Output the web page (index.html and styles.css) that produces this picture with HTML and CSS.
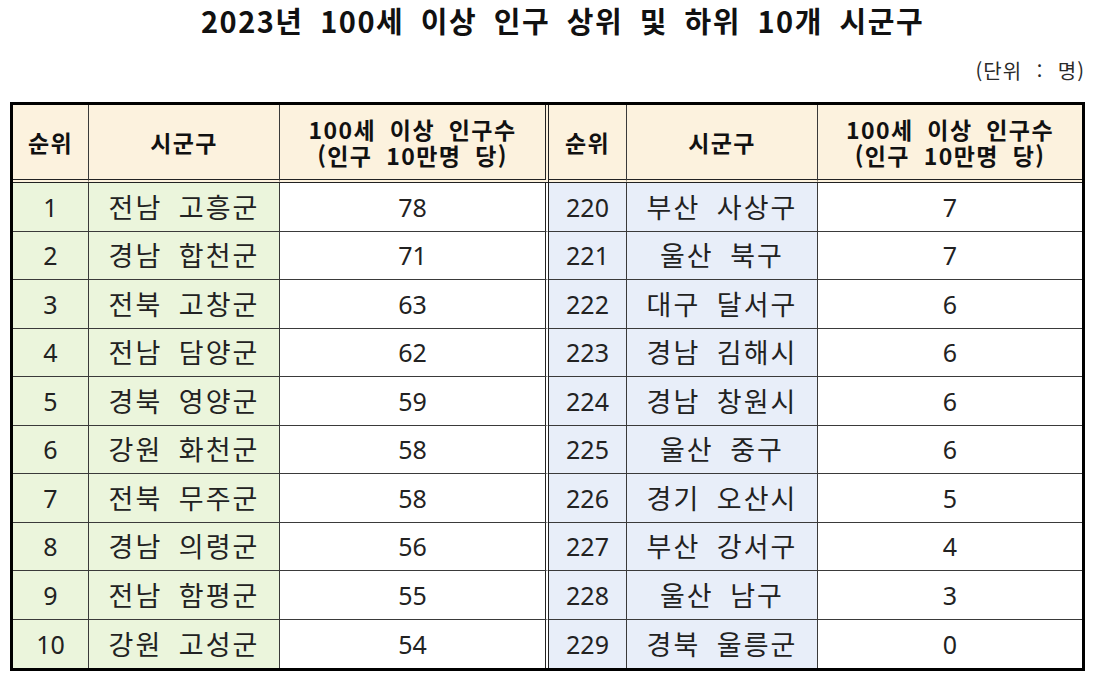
FILE: index.html
```html
<!DOCTYPE html>
<html lang="ko">
<head>
<meta charset="utf-8">
<title>2023년 100세 이상 인구 상위 및 하위 10개 시군구</title>
<link rel="stylesheet" href="styles.css">
</head>
<body>
<div class="page">
  <h1 class="title">2023년 100세 이상 인구 상위 및 하위 10개 시군구</h1>
  <div class="unit">(단위 : 명)</div>
  <table class="rank">
    <colgroup>
      <col class="c-rank"><col class="c-name"><col class="c-val-l">
      <col class="c-rank2"><col class="c-name"><col class="c-val-r">
    </colgroup>
    <thead>
      <tr>
        <th>순위</th><th>시군구</th><th class="split">100세 이상 인구수<br>(인구 10만명 당)</th>
        <th>순위</th><th>시군구</th><th class="last">100세 이상 인구수<br>(인구 10만명 당)</th>
      </tr>
    </thead>
    <tbody>
      <tr><td class="g">1</td><td class="g name">전남 고흥군</td><td class="split">78</td><td class="b">220</td><td class="b name">부산 사상구</td><td class="last">7</td></tr>
      <tr><td class="g">2</td><td class="g name">경남 합천군</td><td class="split">71</td><td class="b">221</td><td class="b name">울산 북구</td><td class="last">7</td></tr>
      <tr><td class="g">3</td><td class="g name">전북 고창군</td><td class="split">63</td><td class="b">222</td><td class="b name">대구 달서구</td><td class="last">6</td></tr>
      <tr><td class="g">4</td><td class="g name">전남 담양군</td><td class="split">62</td><td class="b">223</td><td class="b name">경남 김해시</td><td class="last">6</td></tr>
      <tr><td class="g">5</td><td class="g name">경북 영양군</td><td class="split">59</td><td class="b">224</td><td class="b name">경남 창원시</td><td class="last">6</td></tr>
      <tr><td class="g">6</td><td class="g name">강원 화천군</td><td class="split">58</td><td class="b">225</td><td class="b name">울산 중구</td><td class="last">6</td></tr>
      <tr><td class="g">7</td><td class="g name">전북 무주군</td><td class="split">58</td><td class="b">226</td><td class="b name">경기 오산시</td><td class="last">5</td></tr>
      <tr><td class="g">8</td><td class="g name">경남 의령군</td><td class="split">56</td><td class="b">227</td><td class="b name">부산 강서구</td><td class="last">4</td></tr>
      <tr><td class="g">9</td><td class="g name">전남 함평군</td><td class="split">55</td><td class="b">228</td><td class="b name">울산 남구</td><td class="last">3</td></tr>
      <tr><td class="g">10</td><td class="g name">강원 고성군</td><td class="split">54</td><td class="b">229</td><td class="b name">경북 울릉군</td><td class="last">0</td></tr>
    </tbody>
  </table>
</div>
</body>
</html>
```

FILE: styles.css
```css
html, body {
  margin: 0;
  padding: 0;
  background: #ffffff;
}

body {
  font-family: "Noto Sans", "Noto Sans CJK KR", sans-serif;
  color: #1e1e1e;
}

.page {
  width: 1075px;
  padding: 0 10px;
}

.title {
  margin: 0;
  padding: 3px 0 0 30px;
  height: 40px;
  box-sizing: border-box;
  font-family: "Noto Sans CJK KR", sans-serif;
  font-size: 29px;
  font-weight: 700;
  line-height: 35px;
  text-align: center;
  color: #111111;
  letter-spacing: 1.5px;
  word-spacing: 7px;
}

.unit {
  height: 62px;
  padding-top: 18px;
  box-sizing: border-box;
  text-align: right;
  font-family: "Noto Sans CJK KR", sans-serif;
  font-size: 20px;
  line-height: 26px;
  color: #2a2a2a;
  letter-spacing: 1px;
  word-spacing: 8px;
}

.rank {
  width: 1075px;
  table-layout: fixed;
  border-collapse: separate;
  border-spacing: 0;
  border: 3px solid #000000;
}

.c-rank { width: 76px; }
.c-name { width: 191px; }
.c-val-l { width: 269px; }
.c-rank2 { width: 78px; }
.c-val-r { width: 264px; }

.rank th,
.rank td {
  box-sizing: border-box;
  padding: 0;
  text-align: center;
  vertical-align: middle;
  border-right: 1px solid #3a3a3a;
  border-bottom: 1px solid #3a3a3a;
}

.rank th {
  height: 78px;
  background: #fcf2de;
  font-family: "Noto Sans CJK KR", sans-serif;
  font-size: 23px;
  font-weight: 700;
  line-height: 26px;
  color: #111111;
  border-bottom: 4px double #222222;
  letter-spacing: 1.4px;
  word-spacing: 6px;
}

.rank td {
  height: 48.5px;
  font-size: 25px;
  line-height: 30px;
  color: #222222;
}

.rank tbody tr:last-child td {
  border-bottom: none;
}

.rank .name {
  font-family: "Noto Sans CJK KR", sans-serif;
  font-size: 27px;
  letter-spacing: 2px;
  word-spacing: 7px;
}

.rank .g { background: #ebf5dc; }
.rank .b { background: #e8eef9; }

.rank .split {
  border-right: 4px double #222222;
}

.rank .last {
  border-right: none;
}
```
